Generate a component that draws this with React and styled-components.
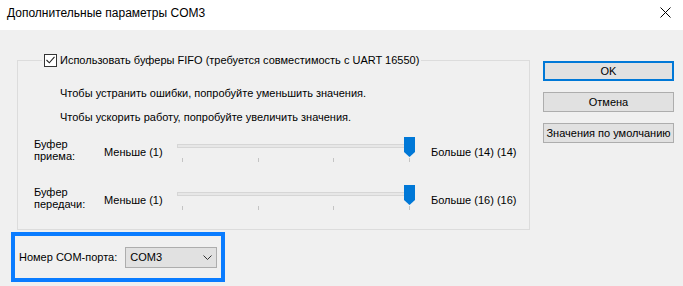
import React from 'react'
import styled, { createGlobalStyle } from 'styled-components'

const GlobalStyle = createGlobalStyle`
  html, body {
    margin: 0;
    padding: 0;
    background: #f0f0f0;
  }
  body {
    font-family: "Liberation Sans", Arial, sans-serif;
    font-size: 11px;
    color: #000;
    white-space: nowrap;
  }
`

const Window = styled.div`
  width: 683px;
  height: 286px;
  display: flex;
  flex-direction: column;
  background: #f0f0f0;
  overflow: hidden;
`

const TitleBar = styled.div`
  height: 30px;
  box-sizing: border-box;
  flex: none;
  background: #fff;
  display: flex;
  align-items: center;
  justify-content: space-between;
  padding: 0 12px 5px 7px;
  font-size: 12px;
`

const CloseIcon = styled.svg`
  width: 11px;
  height: 11px;
  display: block;
`

const Content = styled.div`
  display: flex;
  padding: 23px 0 0 11px;
`

const LeftColumn = styled.div`
  width: 519px;
  display: flex;
  flex-direction: column;
`

const GroupBox = styled.fieldset`
  margin: 0 0 0 6px;
  padding: 0 0 18px 0;
  min-width: 0;
  border: 1px solid #dcdcdc;
  width: 513px;
  box-sizing: border-box;
`

const Legend = styled.legend`
  margin-left: 24px;
  padding: 0 2px;
  display: flex;
  align-items: center;
  gap: 3px;
  line-height: 14px;
`

const CheckBox = styled.span`
  width: 13px;
  height: 13px;
  box-sizing: border-box;
  border: 1px solid #333;
  background: #fff;
  display: flex;
  align-items: center;
  justify-content: center;
`

const Hints = styled.div`
  margin-top: 14px;
  padding-left: 42px;
`

const Hint = styled.div`
  line-height: 24px;
  height: 24px;
`

const SliderRow = styled.div`
  display: grid;
  grid-template-columns: 70px 73px 254px auto;
  height: 26px;
  padding-left: 16px;
  margin-top: ${p => p.$gap}px;
`

const RowLabel = styled.div`
  line-height: 12px;
  margin-top: 1px;
`

const EndLabel = styled.div`
  line-height: 14px;
  margin-top: 8px;
`

const TrackArea = styled.div`
  position: relative;
`

const Track = styled.div`
  position: absolute;
  left: 0;
  top: 7px;
  width: 238px;
  height: 4px;
  box-sizing: border-box;
  background: #e7e7e7;
  border: 1px solid #d6d6d6;
`

const Tick = styled.div`
  position: absolute;
  top: 21px;
  width: 1px;
  height: 4px;
  background: #c4c4c4;
`

const Thumb = styled.svg`
  position: absolute;
  top: 0;
  left: 227px;
  width: 11px;
  height: 20px;
`

const PortBox = styled.div`
  margin-top: 2px;
  width: 214px;
  height: 50px;
  box-sizing: border-box;
  border: 4px solid #0a7cff;
  display: flex;
  align-items: center;
  padding-left: 4px;
  gap: 8px;
`

const Combo = styled.div`
  width: 92px;
  height: 21px;
  box-sizing: border-box;
  border: 1px solid #adadad;
  background: #e1e1e1;
  display: flex;
  align-items: center;
  justify-content: space-between;
  padding: 0 4px 0 4px;
`

const Chevron = styled.svg`
  width: 9px;
  height: 5px;
`

const Buttons = styled.div`
  margin: 8px 0 0 13px;
  display: flex;
  flex-direction: column;
  gap: 11px;
`

const Button = styled.button`
  width: 131px;
  height: 20px;
  box-sizing: border-box;
  background: #e1e1e1;
  border: ${p => (p.$default ? '2px solid #0078d7' : '1px solid #adadad')};
  font-family: inherit;
  font-size: 11px;
  color: #000;
  padding: 0;
  white-space: nowrap;
  display: flex;
  align-items: center;
  justify-content: center;
`

const ticks = [5, 81, 156, 232]

function Slider({ label, max }) {
  return (
    <SliderRow $gap={max === 14 ? 8 : 22}>
      <RowLabel>
        Буфер
        <br />
        {label}
      </RowLabel>
      <EndLabel>Меньше (1)</EndLabel>
      <TrackArea>
        <Track />
        {ticks.map(t => (
          <Tick key={t} style={{ left: t }} />
        ))}
        <Thumb viewBox="0 0 11 20">
          <path d="M0 0H11V15L5.5 20L0 15Z" fill="#0078d7" />
        </Thumb>
      </TrackArea>
      <EndLabel>
        Больше ({max}) ({max})
      </EndLabel>
    </SliderRow>
  )
}

export default function App() {
  return (
    <Window>
      <GlobalStyle />
      <TitleBar>
        <span>Дополнительные параметры COM3</span>
        <CloseIcon viewBox="0 0 11 11">
          <path d="M0.5 0.5L10.5 10.5M10.5 0.5L0.5 10.5" stroke="#000" strokeWidth="1" />
        </CloseIcon>
      </TitleBar>
      <Content>
        <LeftColumn>
          <GroupBox>
            <Legend>
              <CheckBox>
                <svg width="9" height="8" viewBox="0 0 9 8">
                  <path d="M0.5 4L3.3 6.8L8.5 0.8" stroke="#222" strokeWidth="1.1" fill="none" />
                </svg>
              </CheckBox>
              Использовать буферы FIFO (требуется совместимость с UART 16550)
            </Legend>
            <Hints>
              <Hint>Чтобы устранить ошибки, попробуйте уменьшить значения.</Hint>
              <Hint>Чтобы ускорить работу, попробуйте увеличить значения.</Hint>
            </Hints>
            <Slider label="приема:" max={14} />
            <Slider label="передачи:" max={16} />
          </GroupBox>
          <PortBox>
            <span>Номер COM-порта:</span>
            <Combo>
              <span>COM3</span>
              <Chevron viewBox="0 0 9 5">
                <path d="M0.5 0.5L4.5 4.5L8.5 0.5" stroke="#333" strokeWidth="1" fill="none" />
              </Chevron>
            </Combo>
          </PortBox>
        </LeftColumn>
        <Buttons>
          <Button $default>OK</Button>
          <Button>Отмена</Button>
          <Button>Значения по умолчанию</Button>
        </Buttons>
      </Content>
    </Window>
  )
}
